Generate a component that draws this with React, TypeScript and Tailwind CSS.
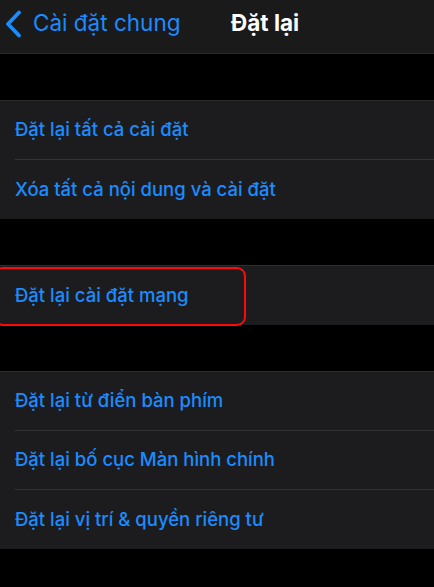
const groups: string[][] = [
  ['Đặt lại tất cả cài đặt', 'Xóa tất cả nội dung và cài đặt'],
  ['Đặt lại cài đặt mạng'],
  ['Đặt lại từ điển bàn phím', 'Đặt lại bố cục Màn hình chính', 'Đặt lại vị trí & quyền riêng tư'],
]

function Row({ label, last, highlight }: { label: string; last: boolean; highlight?: boolean }) {
  return (
    <div className="relative h-[59px] pl-[15px] flex flex-col">
      <div className="flex-1 flex items-center text-[18.5px] font-medium text-[#1a8cff]">{label}</div>
      {!last && <div className="h-px bg-[#343436]" />}
      {highlight && (
        <div className="absolute left-[-6px] top-[1px] w-[252px] h-[59px] rounded-[9px] border-2 border-[#ff0a0a]" />
      )}
    </div>
  )
}

export default function App() {
  return (
    <div className="w-[434px] h-[587px] bg-black overflow-hidden font-['Inter',sans-serif]">
      <div className="h-[54px] pb-[6px] bg-[#1a1a1b] border-b border-[#2a2a2c] flex items-center relative">
        <div className="flex items-center pl-[4px] text-[#1a8cff]">
          <svg width="18" height="28" viewBox="0 0 18 28" fill="none">
            <path d="M15 2.5L4 14l11 11.5" stroke="#1a8cff" strokeWidth="3.8" strokeLinecap="round" strokeLinejoin="round" />
          </svg>
          <span className="ml-[11px] text-[22.5px] leading-none">Cài đặt chung</span>
        </div>
        <span className="absolute left-[231px] text-[22.5px] font-bold text-white leading-none">Đặt lại</span>
      </div>
      <div className="flex flex-col gap-[46px] pt-[46px]">
        {groups.map((rows, gi) => (
          <div key={gi} className="bg-[#1c1c1e] border-t border-[#2c2c2e]">
            {rows.map((r, i) => (
              <Row key={r} label={r} last={i === rows.length - 1} highlight={gi === 1} />
            ))}
          </div>
        ))}
      </div>
    </div>
  )
}
